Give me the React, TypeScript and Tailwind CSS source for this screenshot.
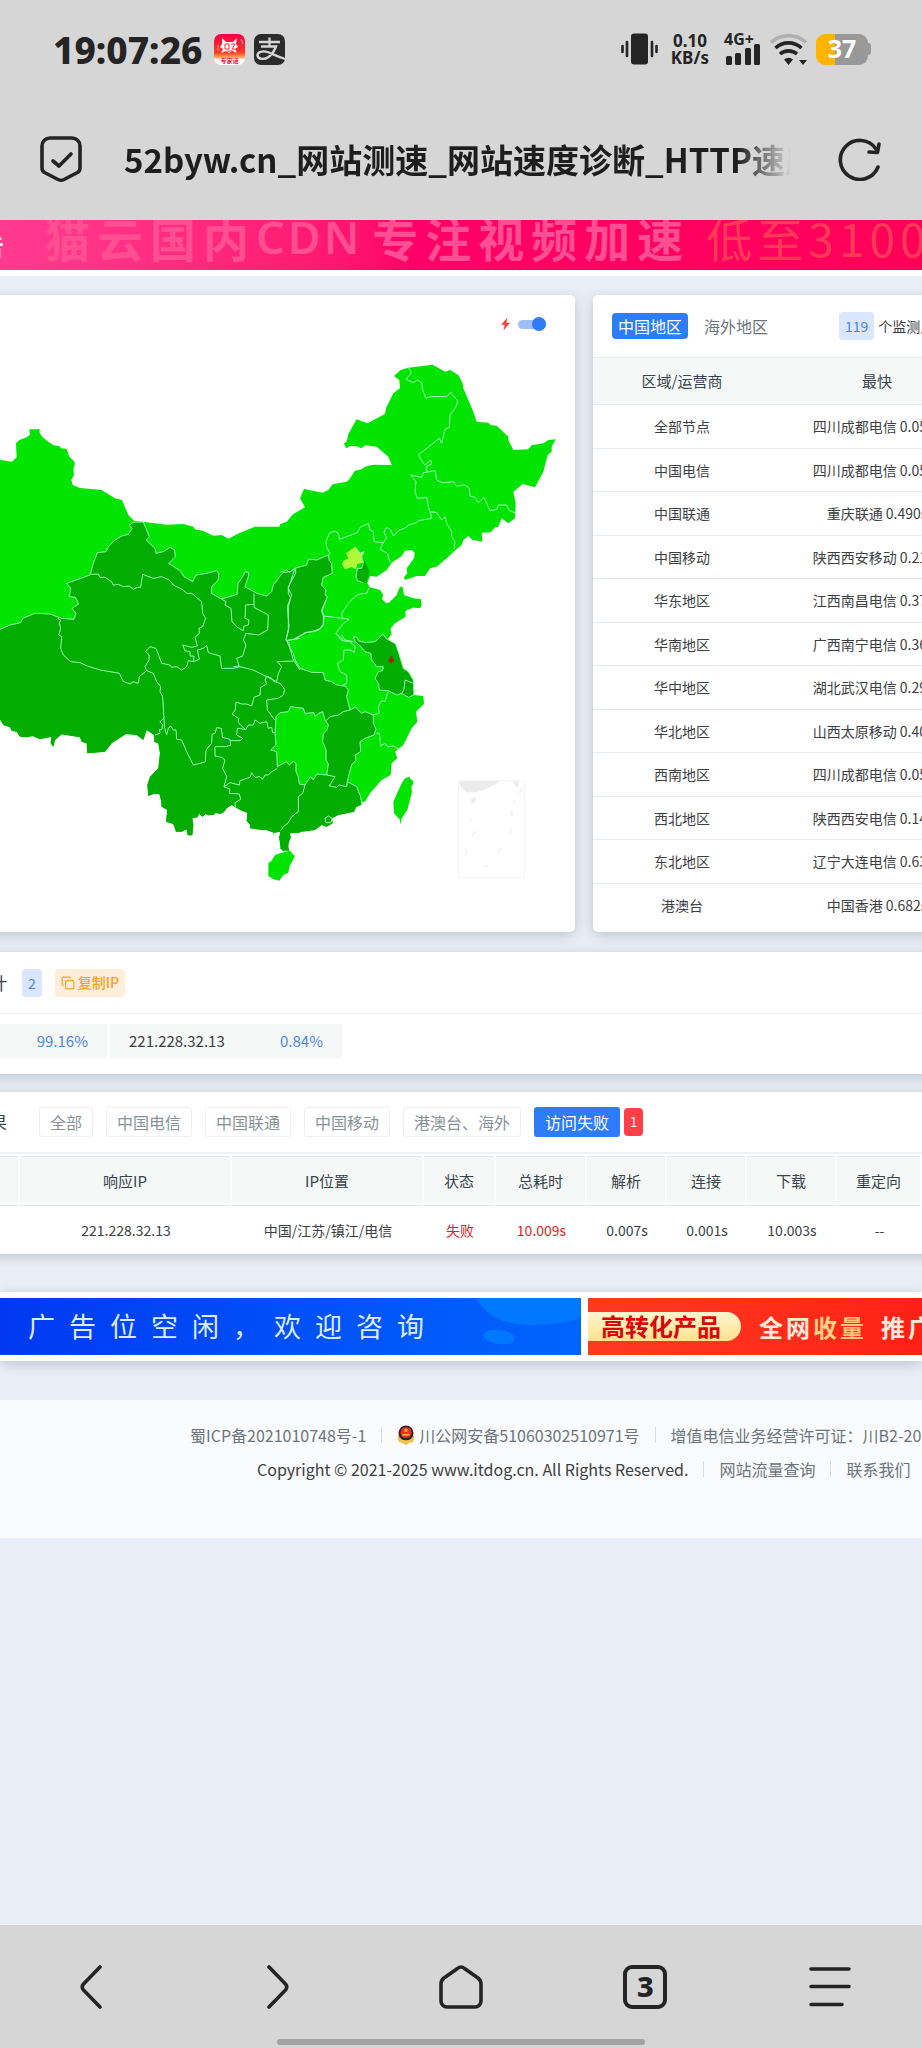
import React from 'react';
import { CopyIcon } from 'lucide-react';

const regions = [
  { name: '全部节点', fastest: '四川成都电信 0.052s' },
  { name: '中国电信', fastest: '四川成都电信 0.052s' },
  { name: '中国联通', fastest: '重庆联通 0.490s' },
  { name: '中国移动', fastest: '陕西西安移动 0.211s' },
  { name: '华东地区', fastest: '江西南昌电信 0.371s' },
  { name: '华南地区', fastest: '广西南宁电信 0.361s' },
  { name: '华中地区', fastest: '湖北武汉电信 0.291s' },
  { name: '华北地区', fastest: '山西太原移动 0.401s' },
  { name: '西南地区', fastest: '四川成都电信 0.052s' },
  { name: '西北地区', fastest: '陕西西安电信 0.141s' },
  { name: '东北地区', fastest: '辽宁大连电信 0.631s' },
  { name: '港澳台', fastest: '中国香港 0.682s' },
];

const filters = ['全部', '中国电信', '中国联通', '中国移动', '港澳台、海外'];

const columns = [
  { name: '', width: 'w-[20px]' },
  { name: '响应IP', width: 'w-[212px]' },
  { name: 'IP位置', width: 'w-[192px]' },
  { name: '状态', width: 'w-[72px]' },
  { name: '总耗时', width: 'w-[91px]' },
  { name: '解析', width: 'w-[80px]' },
  { name: '连接', width: 'w-[80px]' },
  { name: '下载', width: 'w-[90px]' },
  { name: '重定向', width: '' },
];

// The map is drawn as three overlapping sheets: west, north east, south east
const WEST = 'translate(0 180)';
const NORTH_EAST = 'translate(840 0)';
const SOUTH_EAST = 'translate(750 780)';

const westCoast =
  'L868,1300 864,1350 842,1348 838,1310 842,1295 822,1298 800,1290 770,1288 758,1284 740,1262 742,1238 725,1232 706,1222 695,1215 680,1225 672,1236 660,1242 648,1238 640,1245 625,1246 616,1242 608,1250 598,1241 592,1252 577,1255 580,1275 577,1306 563,1306 560,1288 545,1295 528,1295 520,1272 498,1265 502,1230 485,1220 483,1200 478,1182 462,1181 445,1188 442,1155 450,1130 475,1105 480,1060 475,1030 463,1026 462,1005 440,990 430,1020 410,1005 378,1002 335,1030 315,1055 262,1060 260,1030 245,1025 240,1012 185,1003 165,1020 160,1040 152,1030 154,1010 120,1018 98,1008 80,1012 60,1010 50,995 35,992 30,982 10,975 0,958';

const westEdge =
  'M0,688 L30,675 62,668 68,655 105,640 150,642 185,655 222,658 228,640 216,625 236,612 226,592 208,590 212,565 200,550 270,525 280,490 292,458 318,455 325,440 345,420 365,408 385,403 396,385 388,375 402,366 430,366 448,410 438,420 465,445 468,460 490,455 510,442 524,450 526,470 506,490 540,512 552,530 578,545 588,525 620,520 650,512 656,520 655,540 635,560 634,580 665,597 712,583 714,550 728,530 735,515 746,518 745,530 735,560 770,580 800,588 815,575 820,555 848,518 870,515 885,505';

const hunan =
  'M78,350 L90,338 115,335 122,320 160,325 165,340 192,338 196,350 205,340 218,335 225,360 235,375 230,392 220,400 218,425 228,450 228,480 235,492 230,525 200,522 190,540 182,530 165,555 148,552 145,530 138,515 138,490 130,484 118,495 110,485 82,500 80,455 62,450 78,435 75,400 Z';

const southEdge =
  'M228,0 L215,30 222,50 220,72 210,85 195,92 165,98 140,115 110,122 118,130 120,145 130,160 135,180 150,205 185,217 220,218 225,240 245,245 260,255 285,258 295,270 290,290 300,330 315,322 325,330 335,340 345,335 370,345 370,370 378,388 372,405 345,415 330,425 332,455 315,465 318,480 305,495 298,520 292,545 320,560 332,590 335,612';

const jiangsu =
  'M310,110 L322,112 325,122 345,128 375,125 388,112 400,103 408,115 437,132 448,165 460,205 475,215 490,240 492,285 475,292 455,280 440,285 415,272 388,270 385,250 375,235 385,215 398,212 400,200 380,200 365,180 362,160 345,155 328,135 315,125 Z';

const westBorders = [
  'M272,523 L295,522 300,532 315,532 335,545 340,555 355,553 370,560 388,558 400,568 412,562 422,562 428,523 460,535 485,530 508,540 520,555 550,570 560,580 575,580 605,605 608,640 617,655 608,680 597,685 598,700 585,712 592,738 575,742 548,735 555,752 570,755 570,768 582,768 580,785 565,782 560,800 545,810 530,800 515,802 510,795 485,790 468,745 450,740 437,755 447,765 447,780 435,800 440,812 418,830 415,850 398,845 392,852 370,845 358,820 330,815 300,810 262,798 240,788 212,785 190,765 182,745 185,710 176,705 182,685 178,670 182,660 173,655',
  'M440,812 L460,820 470,845 482,860 480,875 488,890 492,955 480,965 488,975 485,990 478,988 480,1000 465,1005',
  'M492,955 L494,985 500,1005 505,985 512,978 520,990 528,990 530,1018 545,1020 560,1055 580,1095 600,1090 616,1085 618,1050 635,1030 636,1003 645,1000 650,983 664,985 668,1012 690,1018 692,1035 680,1040 645,1040 645,1068 665,1072 675,1080 668,1105 680,1130 672,1160',
  'M692,1022 L720,1022 728,1015 710,1005 712,985 738,988 745,975 760,975 765,960 780,970 800,965 805,985 815,982 818,998 826,998',
  'M672,1160 L690,1148 718,1155 720,1142 750,1132 755,1118 765,1132 780,1130 788,1138 795,1125 805,1125 815,1115 832,1105',
  'M672,1160 L690,1168 688,1180 718,1182 722,1198 705,1208 706,1222',
  'M800,828 L795,840 800,852 782,862 780,885 762,892 755,918 740,912 725,912 708,906 706,930 696,942 715,955 715,968 735,988',
  'M800,828 L815,835 822,845 840,850 854,868 850,885 835,895 800,900 802,930 824,960',
  'M580,785 L598,778 592,750 610,745 620,736 625,758 660,768 665,805 700,805 720,800 740,805 760,810 790,825 830,845 835,820 845,800 832,785 880,783',
  'M700,800 L718,798 710,775 728,768 738,735 730,720 738,700 775,705 803,690 805,645 762,622 762,580',
  'M665,597 L678,605 675,615 693,625 696,665 712,682 730,692 732,678 745,675 747,660 735,655 737,615 762,613',
  'M887,508 L887,520 865,560 865,580 872,595 865,620 865,690 858,722 M900,715 L860,722 870,745 880,780 900,810',
];

const northEastBorders = [
  'M0,697 L20,690 28,697 45,685 80,675 85,657 110,660 145,645 150,640 140,622 138,605 148,580 165,573 175,580 178,598 232,578 240,562 265,550 270,570 280,575 282,605 310,608 300,628 322,640 330,668',
  'M310,608 L320,592 312,578 316,567 322,563 332,570 340,588 355,572 380,562 385,555 410,548 415,542 455,535 450,515',
  'M458,515 L470,518 485,540 495,530 500,550 515,575 515,590 525,605 522,628',
  'M465,518 L450,515 445,500 440,472 412,475 405,455 408,425 392,405 425,412 430,398 465,392 470,420 485,428 500,428 520,425 530,438 555,435 568,445 570,468 585,472 595,488 612,472 630,512 650,508 655,495 680,495 688,512 705,518',
  'M385,83 L395,98 378,118 400,128 412,120 425,128 428,150 438,175 450,170 500,170 512,157 533,183 528,200 510,225 508,262 495,268 485,310 478,295 415,345 430,370 435,375 452,360 455,372 438,380 442,398',
  'M145,645 L148,662 155,670 157,700 130,712 125,735 138,750 135,765 142,770 125,815 130,828 130,855 118,870 100,875 80,878 45,895',
  'M45,685 L25,745 35,765 22,800 27,860 18,900',
  'M268,742 L260,760 240,762 225,770 205,790 185,820 188,835 130,828',
  'M188,835 L208,838 188,852 168,880 190,900',
  'M225,620 L240,640 252,635 245,650 250,668 245,685 232,685 228,710 232,722 250,728',
];

const southEastBorders = [
  'M258,100 L275,122 300,125 315,140 312,158 302,150 282,150 280,180 262,190 270,215 290,225 290,250 275,258',
  'M275,105 L285,120 310,125',
  'M415,272 L405,305 395,302 385,320 388,340 368,345 M462,268 L465,240 490,250 M462,268 L455,280',
  'M378,400 L388,400 392,438 405,430 412,440 430,438 452,452',
  'M230,525 L255,530 238,558 260,562 268,555 290,560 292,545',
  'M165,555 L158,580 145,590 145,635 125,650 115,668 100,680 92,692',
  'M300,330 L280,335 265,345 240,350 228,362',
  'M225,655 L235,648 247,655 242,668 228,668 Z',
];

const ChinaMap: React.FC = () => (
  <svg viewBox="0 45 1725 1731" className="block w-full" role="img" aria-label="中国地图">
    <g fill="#00e400">
      <path
        transform={WEST}
        d={`M0,180 L20,182 36,185 50,172 48,130 58,120 80,112 90,104 88,88 120,88 118,96 126,110 145,125 160,136 178,138 183,145 200,147 208,170 224,185 224,195 220,208 222,225 214,240 218,255 240,264 305,270 345,295 366,300 385,345 402,362 435,366 500,374 550,372 580,380 585,388 610,393 640,407 665,405 685,416 720,398 765,380 835,380 862,368 880,345 900,335 L900,1298 ${westCoast} Z`}
      />
      <path
        transform={NORTH_EAST}
        d="M0,553 L20,545 40,522 75,502 60,475 72,447 128,458 145,450 158,433 200,425 208,418 225,392 245,388 255,380 280,374 335,375 325,350 290,320 255,316 245,325 230,319 210,318 198,325 192,310 200,305 205,282 230,238 262,250 315,222 318,205 340,160 360,145 358,120 342,108 362,90 385,83 458,74 495,95 510,90 535,105 548,130 550,145 565,180 580,215 590,245 625,248 632,256 650,257 685,290 685,300 700,330 745,328 755,316 790,310 805,300 827,298 815,320 815,335 803,345 790,395 765,442 728,432 700,455 707,490 705,535 685,550 665,535 655,560 645,562 632,577 605,578 607,605 578,600 565,588 550,600 545,615 527,630 500,655 470,680 450,685 435,708 410,708 375,720 372,712 382,700 380,685 402,655 404,638 395,630 375,632 365,648 335,668 320,690 290,710 270,708 262,730 270,742 300,750 310,765 305,778 320,790 328,788 350,765 360,740 368,742 372,765 400,775 423,778 423,800 400,802 390,808 375,808 377,830 345,850 328,870 332,885 322,900 0,900 Z"
      />
      <path
        transform={SOUTH_EAST}
        d="M0,0 L392,0 400,12 415,12 425,0 512,0 515,15 510,25 480,22 465,35 465,45 440,62 420,80 425,105 405,103 408,115 437,132 448,165 460,205 475,215 490,240 492,285 520,288 522,312 498,335 502,365 485,385 460,435 435,455 442,475 425,490 422,525 395,540 360,580 345,605 335,605 335,615 318,622 312,635 265,645 245,655 248,670 230,680 215,675 195,690 120,700 122,715 112,735 118,750 97,752 88,715 92,692 70,695 72,715 68,695 50,690 0,685 Z"
      />
    </g>
    <g fill="#00ad00">
      <path
        transform={WEST}
        d={`${westEdge} L900,502 900,715 860,722 878,765 885,785 900,810 900,1298 ${westCoast} Z`}
      />
      <path
        transform={NORTH_EAST}
        d="M0,697 L20,690 45,685 80,675 85,657 110,660 145,645 148,662 155,670 157,700 130,712 125,735 138,750 135,765 142,770 125,815 130,855 118,870 100,875 45,895 0,900 Z"
      />
      <path
        transform={NORTH_EAST}
        d="M250,658 L258,672 268,690 268,705 262,715 260,726 250,728 230,720 232,685 245,685 245,668 Z"
      />
      <path
        transform={SOUTH_EAST}
        d={`${southEdge} L318,622 312,635 265,645 245,655 248,670 230,680 215,675 195,690 120,700 122,715 112,735 118,752 97,752 88,715 92,692 50,690 0,685 0,0 Z`}
      />
      <path transform={SOUTH_EAST} d={jiangsu} />
    </g>
    <path transform={SOUTH_EAST} fill="#00e400" d={hunan} />
    <path
      transform={NORTH_EAST}
      fill="#b0f838"
      d="M225,620 L240,640 252,635 245,650 250,668 232,672 228,688 215,682 195,688 186,675 190,662 205,655 198,640 Z"
    />
    <g fill="none" stroke="#9dffb8" strokeWidth="3" strokeLinejoin="round">
      <g transform={WEST}>
        <path d={westEdge} />
        {westBorders.map((d) => (
          <path key={d} d={d} />
        ))}
      </g>
      <g transform={NORTH_EAST}>
        {northEastBorders.map((d) => (
          <path key={d} d={d} />
        ))}
      </g>
      <g transform={SOUTH_EAST}>
        <path d={southEdge} />
        <path d={jiangsu} />
        <path d={hunan} />
        {southEastBorders.map((d) => (
          <path key={d} d={d} />
        ))}
      </g>
    </g>
    <g transform={SOUTH_EAST}>
      {/* Hainan and Taiwan */}
      <g fill="#00e400">
        <path d="M75,765 L100,757 120,752 128,762 135,768 118,800 115,818 100,825 88,842 70,838 55,828 55,790 65,782 Z" />
        <path d="M478,530 L484,540 490,542 488,555 484,560 486,575 472,630 455,655 452,674 449,658 432,640 430,605 442,578 455,550 465,535 Z" />
      </g>
      <path d="M421,169 h5 l1,7 6,0 -3,6 2,5 -6,-1 -1,5 -4,-5 -5,1 2,-5 -3,-5 6,-1 Z" fill="#e00000" />
      {/* South China Sea inset */}
      <rect x="626" y="542" width="197" height="290" fill="none" stroke="#f4f4f4" strokeWidth="3" />
      <g fill="#ececec">
        <path d="M628,544 H750 L732,556 705,568 680,577 650,577 640,568 628,554 Z" />
        <path d="M788,544 H808 L803,562 795,556 Z" />
        <path d="M662,598 L678,591 676,605 664,612 Z" />
        <path d="M806,578 l10,-14 2,2 -8,14 Z M790,612 l5,-14 2,2 -4,14 Z M783,632 l5,4 0,12 -5,-2 Z M778,700 l6,-16 2,2 -4,16 Z M741,764 l12,-22 2,2 -10,20 Z M644,744 l4,2 3,18 -3,-2 Z M665,705 l12,-14 1,4 -10,12 Z M656,648 l12,18 -2,2 Z M702,798 l12,-4 -2,8 Z" />
      </g>
    </g>
  </svg>
);

const StatusBar: React.FC = () => (
  <div className="flex h-[98px] items-center justify-between pr-[51px] pl-[53px]">
    <div className="flex items-center">
      <span className="mr-[12px] font-['Noto_Sans'] text-[37px] leading-none font-extrabold">19:07:26</span>
      <svg viewBox="0 0 31 31" className="mr-[9px] size-[31px]">
        <defs>
          <linearGradient id="app" x1="0" y1="0" x2="0" y2="1">
            <stop offset="0" stopColor="#f5004a" />
            <stop offset="0.6" stopColor="#ff3a20" />
            <stop offset="0.76" stopColor="#ffb060" />
            <stop offset="0.82" stopColor="#fff" />
          </linearGradient>
        </defs>
        <rect width="31" height="31" rx="7" fill="url(#app)" />
        <path d="M8 4l4 4h7l4-4-1 6 2 3-3 2 2 4-5-2-3 2-3-2-5 2 2-4-3-2 2-3z" fill="#fff" />
        <path d="M11 10h4v5h-4zM17 10h4l-3 5h3M13 17h6" fill="none" stroke="#ff2740" strokeWidth="1" />
        <path d="M4 11v5M27 5l2 5" stroke="#ffb090" strokeWidth="1" />
        <text x="15.500" y="29" textAnchor="middle" fontSize="6" fontWeight="700" fill="#f01838" fontFamily="Noto Sans CJK SC, sans-serif">
          专家话
        </text>
      </svg>
      <svg viewBox="0 0 31 31" className="size-[31px]">
        <rect width="31" height="31" rx="7" fill="#2b2b2b" />
        <path
          d="M5 8h21M15.500 3.500v9M7 12.500h15c-1.500 4-4 8-7.500 10.500-4 3-10.500 2.500-11-1.500-.3-3.500 5-5 10-3.500 5 1.500 10 5 18 7"
          fill="none"
          stroke="#d6d6d6"
          strokeWidth="2.300"
        />
      </svg>
    </div>
    <div className="flex items-center">
      <svg viewBox="0 0 37 32" fill="currentColor" className="mr-[13px] h-8 w-[37px]">
        <rect x="10" y="0.500" width="17" height="31" rx="3" />
        <path d="M1.500 13v6M6 9v14M31 9v14M35.500 13v6" stroke="#242424" strokeWidth="2.600" strokeLinecap="round" />
      </svg>
      <div className="mr-[15px] text-center font-['Noto_Sans'] text-[17px] leading-[17px] font-bold">
        <div>0.10</div>
        <div>KB/s</div>
      </div>
      <div className="mr-[9px] flex w-[37px] flex-col">
        <span className="font-['Noto_Sans'] text-[16px] leading-[10px] font-bold">4G+</span>
        <svg viewBox="0 0 37 21" fill="currentColor" className="h-[21px] w-[37px] overflow-visible">
          <rect x="2" y="12" width="6" height="9" rx="1.500" />
          <rect x="11" y="9" width="6" height="12" rx="1.500" />
          <rect x="21" y="4" width="6" height="17" rx="1.500" />
          <rect x="30" y="0" width="6" height="21" rx="1.500" />
        </svg>
      </div>
      <svg viewBox="0 0 38 31" className="mr-2 h-[31px] w-[38px]" fill="none" strokeWidth="3.600">
        <path d="M1 8.500a26 26 0 0 1 35 0" stroke="#b0b0b0" />
        <path d="M5.500 14a19 19 0 0 1 26 0M10 20a13 13 0 0 1 17 0" stroke="#242424" />
        <path d="M14 25.500a7 7 0 0 1 9 0L18.500 31zM29 26h8l-4 5z" fill="#242424" />
      </svg>
      <div className="flex h-[31px] items-center">
        <div className="flex h-full w-[52px] items-center justify-center rounded-[9px] bg-linear-to-r from-[#ffb400] from-37% to-[#989898] to-37% pb-0.5 font-['Noto_Sans'] text-[25px] leading-none font-bold text-white">
          37
        </div>
        <div className="h-3 w-[3px] rounded-r bg-[#989898]" />
      </div>
    </div>
  </div>
);

const AddressBar: React.FC = () => (
  <div className="flex h-[122px] items-center gap-[40px] px-10">
    <button aria-label="安全">
      <svg viewBox="0 0 42 46" className="h-[46px] w-[42px]" fill="none" stroke="#242424" strokeWidth="3.600" strokeLinecap="round" strokeLinejoin="round">
        <path d="M10 2h22a8 8 0 0 1 8 8v22q0 3-2.500 4.500L24 43.500q-3 1.500-6 0L4.500 36.500Q2 35 2 32V10a8 8 0 0 1 8-8z" />
        <path d="M13 25l6 5 12-12" />
      </svg>
    </button>
    <input
      readOnly
      aria-label="网址"
      value="52byw.cn_网站测速_网站速度诊断_HTTP速度"
      className="h-14 min-w-0 flex-1 bg-transparent mask-r-from-91% mask-r-to-99% pl-0.5 text-[33px] font-bold text-[#1e1e1e] outline-none"
    />
    <button aria-label="刷新">
      <svg viewBox="0 0 44 44" className="size-11" fill="none" stroke="#242424" strokeWidth="3.600" strokeLinecap="round" strokeLinejoin="round">
        <path d="M40 30A19.500 19.500 0 1 1 38 12" />
        <path d="M41 7l-1.500 8.500-8.500-.5" />
      </svg>
    </button>
  </div>
);

const PinkBanner: React.FC = () => (
  <div className="border-b-[6px] border-white">
    <div className="flex h-[50px] overflow-hidden bg-linear-to-r from-[#ff3a90] via-[#ff0068] via-45% to-[#ff0058] leading-[46px] font-bold whitespace-nowrap text-[#ff4f92]">
      <span className="-ml-[20px] text-[24px] leading-[50px] text-white">告</span>
      <div className="-mt-1.5 ml-[40px] flex text-[46px]">
        {['猫', '云', '国', '内'].map((char) => (
          <span key={char} className="mr-[7px]">{char}</span>
        ))}
        <span className="mr-[13px] flex gap-[3px] font-['Noto_Sans'] text-[45px] font-semibold">
          <span>C</span>
          <span>D</span>
          <span>N</span>
        </span>
        {['专', '注', '视', '频', '加', '速'].map((char) => (
          <span key={char} className="mr-[7px]">{char}</span>
        ))}
        <span className="ml-4 flex gap-[5px] font-normal text-[#ff3a58]">
          <span>低</span>
          <span>至</span>
          <span>3</span>
          <span>1</span>
          <span>0</span>
          <span>0</span>
        </span>
      </div>
    </div>
  </div>
);

const PoliceBadge: React.FC = () => (
  <svg viewBox="0 0 18 20" className="mr-1 h-5 w-[18px]">
    <path d="M1 12l2-6h12l2 6-1 5-5 1-2 2-2-2-5-1z" fill="#e9a93c" />
    <circle cx="9" cy="8" r="7.500" fill="#2d2420" />
    <circle cx="9" cy="7.500" r="5.500" fill="#e8301c" />
    <path d="M9 3l.7 1.500 1.600.1-1.200 1 .4 1.600L9 6.400l-1.500.8.4-1.600-1.200-1 1.600-.1zM5.500 9h7v1.500h-7z" fill="#ffc83c" />
    <path d="M1 13q8 5 16 0l-1 4-4 1-3 2-3-2-4-1z" fill="#f3c24f" />
  </svg>
);

const Divider: React.FC = () => <span className="mx-[15px] h-4 w-px bg-[#dcdfe2]" />;

const BottomNav: React.FC = () => (
  <nav className="bg-[#d6d6d6] pt-10 pb-[3px] text-[#242424]">
    <div className="grid grid-cols-5 justify-items-center">
      <button aria-label="后退">
        <svg viewBox="0 0 44 44" className="size-11" fill="none" stroke="currentColor" strokeWidth="3.600" strokeLinecap="round" strokeLinejoin="round">
          <path d="M30 2L13.500 19q-2.500 3 0 6L30 42" />
        </svg>
      </button>
      <button aria-label="前进">
        <svg viewBox="0 0 44 44" className="size-11" fill="none" stroke="currentColor" strokeWidth="3.600" strokeLinecap="round" strokeLinejoin="round">
          <path d="M14 2l16.500 17q2.500 3 0 6L14 42" />
        </svg>
      </button>
      <button aria-label="主页">
        <svg viewBox="0 0 44 44" className="size-11" fill="none" stroke="currentColor" strokeWidth="3.600" strokeLinejoin="round">
          <path d="M18.500 3.500q3.500-3 7 0L39 13q3 2.500 3 6v17a6 6 0 0 1-6 6H8a6 6 0 0 1-6-6V19q0-3.500 3-6z" />
        </svg>
      </button>
      <button
        aria-label="标签页"
        className="flex size-11 items-center justify-center rounded-[9px] border-[4px] border-[#242424] pb-1 font-['Noto_Sans'] text-[29px] leading-none font-extrabold"
      >
        3
      </button>
      <button aria-label="菜单">
        <svg viewBox="0 0 44 44" className="size-11" stroke="currentColor" strokeWidth="3.600" strokeLinecap="round">
          <path d="M3 4h38M3 21.500h38M3 39.500h31" />
        </svg>
      </button>
    </div>
    <div className="mx-auto mt-[30px] h-1.5 w-2/5 rounded-full bg-[#a2a2a2]" />
  </nav>
);

const App: React.FC = () => {
  return (
    <div className="flex min-h-screen flex-col overflow-hidden bg-[#eaeef6] font-['Noto_Sans_CJK_SC',sans-serif] text-[#3c4043]">
      <header className="bg-[#d6d6d6] text-[#242424]">
        <StatusBar />
        <AddressBar />
      </header>

      <main className="flex-1">
        <PinkBanner />

        {/* Map and region table */}
        <div className="mt-[19px] grid grid-cols-[575fr_329fr] gap-[18px]">
          <section className="-ml-4 rounded-r-[5px] bg-white pl-4 shadow-[0_3px_12px_rgba(100,120,135,0.35)]">
            <div className="flex h-[60px] items-center justify-end gap-2 pr-[29px] pb-0.5">
              <svg viewBox="0 0 11 16" className="h-[14px] w-[9px]" fill="#f0443c">
                <path d="M8 0L0 9h4.500L3 16l8-9.500H6.500z" />
              </svg>
              <input
                type="checkbox"
                defaultChecked
                aria-label="实时地图"
                className="flex h-[9px] w-7 appearance-none items-center justify-end rounded-full bg-[#9dc0fa] before:size-[14px] before:shrink-0 before:rounded-full before:bg-[#2f7cf6] before:content-['']"
              />
            </div>
            <ChinaMap />
          </section>

          <section className="-mr-4 min-w-0 overflow-hidden rounded-l-[5px] bg-white shadow-[0_3px_12px_rgba(100,120,135,0.35)]">
            <div className="flex h-[62px] items-center pl-[19px] whitespace-nowrap">
              <button className="h-[26px] rounded-[4px] bg-[#2f7cf8] px-1.5 text-[16px] leading-[26px] text-white">中国地区</button>
              <button className="ml-4 text-[16px] text-[#6c757d]">海外地区</button>
              <span className="ml-[71px] h-7 rounded-[4px] bg-[#d9e6fe] px-1.5 text-[14px] leading-7 text-[#4a86ea]">119</span>
              <span className="ml-1 text-[14px]">个监测点</span>
            </div>
            <table className="w-[390px] table-fixed border-separate border-spacing-0 text-center whitespace-nowrap">
              <thead>
                <tr className="h-[48px] bg-[#f6f7f7] text-[15px] text-[#36454c]">
                  <th className="w-[178px] border-y border-[#e6ecf1] p-0 font-normal">区域/运营商</th>
                  <th className="border-y border-[#e6ecf1] p-0 font-normal">最快</th>
                </tr>
              </thead>
              <tbody className="text-[14px]">
                {regions.map((region) => (
                  <tr key={region.name} className="group odd:h-11 even:h-[43px]">
                    <td className="border-b border-[#e6ecf1] p-0 group-last:border-0">{region.name}</td>
                    <td className="border-b border-[#e6ecf1] p-0 group-last:border-0">{region.fastest}</td>
                  </tr>
                ))}
              </tbody>
            </table>
          </section>
        </div>

        {/* Resolved addresses */}
        <section className="-mx-4 mt-5 bg-white px-4 pb-4 shadow-[0_3px_12px_rgba(100,120,135,0.35)]">
          <div className="flex h-[62px] items-center border-b border-[#eef0f2]">
            <h2 className="-ml-[10px] text-[17px] text-[#36454c]">计</h2>
            <span className="ml-[15px] h-7 rounded-[4px] bg-[#d9e6fe] px-1.5 text-[14px] leading-7 text-[#4a86ea]">2</span>
            <button className="ml-[13px] flex h-7 items-center gap-[3px] rounded-[4px] bg-[#ffeeda] px-1.5 text-[14px] font-medium text-[#f9a11b]">
              <CopyIcon className="size-[14px]" />
              复制IP
            </button>
          </div>
          <div className="mt-2.5 flex gap-[3px] text-[15px]">
            <div className="flex h-[34px] w-[107px] items-center justify-end bg-[#f6f7f7] pr-[19px]">
              <span className="text-[#4a86ea]">99.16%</span>
            </div>
            <div className="flex h-[34px] w-[232px] items-center justify-between bg-[#f6f7f7] px-[19px]">
              <span>221.228.32.13</span>
              <span className="text-[#4a86ea]">0.84%</span>
            </div>
          </div>
        </section>

        {/* Test results */}
        <section className="-mx-4 mt-[18px] bg-white px-4 shadow-[0_3px_12px_rgba(100,120,135,0.35)]">
          <div className="flex h-[62px] items-center border-b-2 border-[#f0f1f2] whitespace-nowrap">
            <h2 className="-ml-[10px] text-[17px] text-[#36454c]">果</h2>
            <div className="ml-[32px] flex items-center gap-[13px] text-[16px] text-[#8a9299]">
              {filters.map((filter) => (
                <button key={filter} className="h-[30px] rounded-[3px] border border-[#eef0f3] px-2.5 leading-7">
                  {filter}
                </button>
              ))}
              <button className="h-[30px] rounded-[3px] bg-[#2f7cf8] px-[11px] leading-7 text-white">访问失败</button>
            </div>
            <span className="ml-[4px] h-7 rounded-[4px] bg-[#ff4049] px-1.5 text-[13px] leading-7 text-white">1</span>
          </div>
          <table className="mt-0.5 w-full table-fixed border-separate border-spacing-0 text-center whitespace-nowrap">
            <thead>
              <tr className="h-[50px] text-[15px] text-[#36454c]">
                {columns.map((column) => (
                  <th key={column.name} className={`${column.width} border-r-2 border-white p-0 font-normal`}>
                    <div className="border-b border-[#dfe8ec] pb-0.5">
                      <div className="h-[47px] border-t border-[#dfe8ec] bg-[#f6f7f7] leading-[47px]">{column.name}</div>
                    </div>
                  </th>
                ))}
              </tr>
            </thead>
            <tbody>
              <tr className="h-12 text-[14px]">
                <td className="p-0" />
                <td className="p-0">221.228.32.13</td>
                <td className="p-0">中国/江苏/镇江/电信</td>
                <td className="p-0 text-[#dd1f1f]">失败</td>
                <td className="p-0 text-[#dd1f1f]">10.009s</td>
                <td className="p-0">0.007s</td>
                <td className="p-0">0.001s</td>
                <td className="p-0">10.003s</td>
                <td className="p-0">--</td>
              </tr>
            </tbody>
          </table>
        </section>

        {/* Ads */}
        <div className="mt-[38px] grid grid-cols-[581fr_334fr] gap-[7px] bg-white py-1.5 shadow-[0_3px_12px_rgba(100,120,135,0.35)]">
          <a href="#ad" className="flex h-[57px] items-center justify-between bg-linear-to-r from-[#0038f0] to-[#0064ff] pl-7 text-[27px] text-[#dcecff]">
            <span className="flex gap-[14px]">
              {['广', '告', '位', '空', '闲', '，', '欢', '迎', '咨', '询'].map((char) => (
                <span key={char}>{char}</span>
              ))}
            </span>
            <svg viewBox="0 0 105 57" className="h-[57px] w-[105px]">
              <path d="M0 0c8 16 26 27 55 27 22 0 40-3 50-8V0z" fill="#0078ff" />
              <ellipse cx="23" cy="39" rx="16" ry="7" fill="#0078ff" transform="rotate(8 23 39)" />
            </svg>
          </a>
          <a href="#promo" className="flex h-[57px] items-center overflow-hidden bg-linear-to-r from-[#ff3a20] to-[#ff2016] text-[24px] font-bold whitespace-nowrap">
            <span className="h-[29px] rounded-r-full bg-linear-to-b from-[#fff6d0] to-[#ffe08c] pr-5 pl-[13px] leading-[28px] text-[#d80808]">高转化产品</span>
            <span className="ml-[18px] flex gap-[3px] text-[#ffe9dc]">
              <span>全</span>
              <span>网</span>
              <span className="text-[#ffd288]">收</span>
              <span className="text-[#ffc478]">量</span>
              <span className="ml-[14px]">推</span>
              <span>广</span>
            </span>
          </a>
        </div>

        <footer className="mt-[39px] h-[138px] overflow-hidden bg-[#fafbfc] pt-[18px] text-[16px] whitespace-nowrap text-[#6c757d]">
          <div className="flex h-[34px] items-center pl-[190px]">
            <a href="#icp">蜀ICP备2021010748号-1</a>
            <Divider />
            <PoliceBadge />
            <a href="#police">川公网安备51060302510971号</a>
            <Divider />
            <a href="#license">增值电信业务经营许可证：川B2-20</a>
          </div>
          <div className="flex h-[34px] items-center pl-[257px]">
            <span className="text-[#3c4043]">Copyright © 2021-2025 www.itdog.cn. All Rights Reserved.</span>
            <Divider />
            <a href="#traffic">网站流量查询</a>
            <Divider />
            <a href="#contact">联系我们</a>
          </div>
        </footer>
      </main>

      <BottomNav />
    </div>
  );
};

export default App;
